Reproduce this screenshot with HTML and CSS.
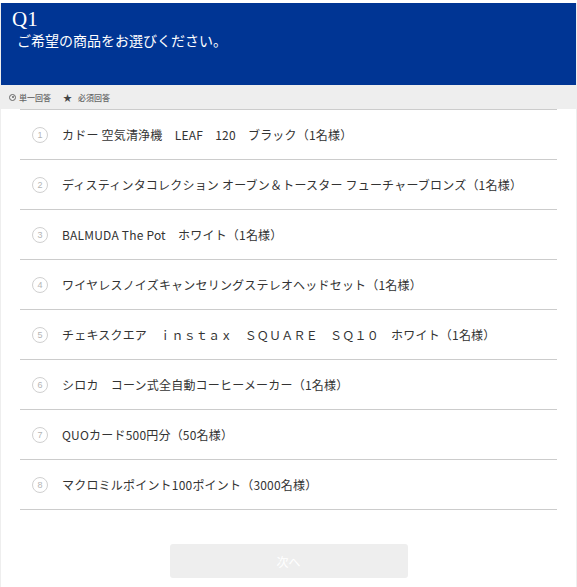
FILE: index.html
```html
<!DOCTYPE html>
<html lang="ja">
<head>
<meta charset="utf-8">
<link rel="stylesheet" href="styles.css">
</head>
<body>
<div class="page">
  <header class="qhead">
    <div class="qnum">Q1</div>
    <div class="qtitle">ご希望の商品をお選びください。</div>
  </header>
  <div class="meta">
    <span class="meta-item"><span class="ico-radio"></span>単一回答</span>
    <span class="meta-item"><span class="ico-star">★</span>必須回答</span>
  </div>
  <ul class="choices">
    <li class="choice"><span class="num">1</span><span class="label">カドー 空気清浄機　LEAF　120　ブラック（1名様）</span></li>
    <li class="choice"><span class="num">2</span><span class="label">ディスティンタコレクション オーブン＆トースター フューチャーブロンズ（1名様）</span></li>
    <li class="choice"><span class="num">3</span><span class="label">BALMUDA The Pot　ホワイト（1名様）</span></li>
    <li class="choice"><span class="num">4</span><span class="label">ワイヤレスノイズキャンセリングステレオヘッドセット（1名様）</span></li>
    <li class="choice"><span class="num">5</span><span class="label">チェキスクエア　ｉｎｓｔａｘ　ＳＱＵＡＲＥ　ＳＱ１０　ホワイト（1名様）</span></li>
    <li class="choice"><span class="num">6</span><span class="label">シロカ　コーン式全自動コーヒーメーカー（1名様）</span></li>
    <li class="choice"><span class="num">7</span><span class="label">QUOカード500円分（50名様）</span></li>
    <li class="choice"><span class="num">8</span><span class="label">マクロミルポイント100ポイント（3000名様）</span></li>
  </ul>
  <div class="actions">
    <button class="next" type="button">次へ</button>
  </div>
</div>
</body>
</html>
```

FILE: styles.css
```css
html, body {
  margin: 0;
  padding: 0;
  background: #fff;
}
body {
  font-family: "Noto Sans CJK JP", "Noto Sans", sans-serif;
  color: #333;
}
.page {
  margin: 3px 0 0 0;
  border-left: 1px solid #eee;
  border-right: 1px solid #eee;
  min-height: 584px;
  box-sizing: border-box;
}
.qhead {
  background: #003594;
  color: #fff;
  height: 82px;
  box-sizing: border-box;
  padding: 5px 11px 0;
}
.qnum {
  font-family: "Liberation Serif", serif;
  font-size: 21px;
  line-height: 22px;
}
.qtitle {
  font-size: 14px;
  line-height: 20px;
  padding-left: 5px;
  margin-top: 0;
}
.meta {
  background: #eeeeee;
  height: 24px;
  display: flex;
  align-items: center;
  gap: 12px;
  padding-left: 8px;
  font-size: 8px;
  color: #666;
  font-weight: 500;
}
.meta-item {
  display: flex;
  align-items: center;
  gap: 3px;
}
.ico-radio {
  width: 5px;
  height: 5px;
  border: 1px solid #666;
  border-radius: 50%;
  position: relative;
  box-sizing: content-box;
}
.ico-radio::after {
  content: "";
  position: absolute;
  left: 1.5px;
  top: 1.5px;
  width: 2px;
  height: 2px;
  border-radius: 50%;
  background: #666;
}
.ico-star {
  font-size: 9px;
  color: #444;
  margin-right: 3px;
}
.choices {
  list-style: none;
  margin: 0 19px;
  padding: 0;
  border-top: 1px solid #ccc;
}
.choice {
  height: 49px;
  border-bottom: 1px solid #ccc;
  display: flex;
  align-items: center;
  padding-left: 12px;
}
.num {
  width: 14px;
  height: 14px;
  border: 1px solid #d0d0d0;
  border-radius: 50%;
  display: flex;
  align-items: center;
  justify-content: center;
  font-family: "Liberation Sans", sans-serif;
  font-size: 9px;
  color: #b5b5b5;
  flex: none;
}
.label {
  margin-left: 14px;
  font-size: 12px;
  letter-spacing: 0.2px;
  color: #333;
  white-space: nowrap;
}
.actions {
  display: flex;
  justify-content: center;
  padding-top: 34px;
}
.next {
  width: 238px;
  height: 34px;
  border: none;
  border-radius: 3px;
  background: #eeeeee;
  color: #fff;
  font-family: "Noto Sans CJK JP", sans-serif;
  font-size: 12px;
}
```
